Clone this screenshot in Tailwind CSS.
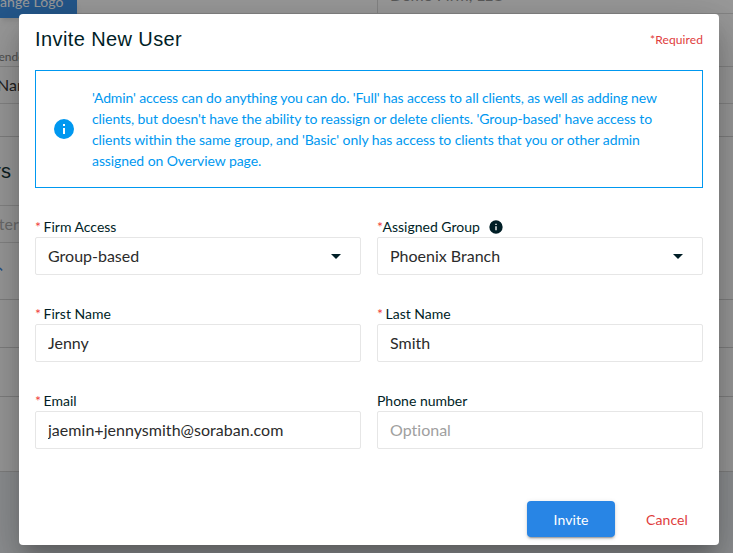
<!DOCTYPE html>
<html lang="en">
<head>
    <meta charset="UTF-8">
    <meta name="viewport" content="width=device-width, initial-scale=1.0">
    <title>Invite New User</title>
    <script src="https://cdn.jsdelivr.net/npm/@tailwindcss/browser@4"></script>
</head>
<body class="relative h-[553px] overflow-hidden bg-[#e9edf0] font-['Lato',sans-serif] text-[#001e26] [font-variant-ligatures:none]">

    <!-- Settings page -->
    <div class="h-[472px] overflow-hidden bg-white">
        <div class="flex h-[14px] justify-between border-b border-[#d9d9d9]">
            <div class="h-[18px] w-[77px] shrink-0 bg-[#2885e5] shadow-md">
                <div class="-mt-[9px] w-[61px] text-[14px] leading-[21px] tracking-[0.1px] whitespace-nowrap text-white">ange Logo</div>
            </div>
            <div class="h-[14px] w-[356px] shrink-0 border-b border-l border-[#d9d9d9] pl-3">
                <div class="-mt-[15px] text-[16px] leading-[20px] text-[#8a8a8a]">Demo Firm, LLC</div>
            </div>
        </div>
        <div class="h-[53px] border-b border-[#d9d9d9] pt-[34px]">
            <div class="-ml-[8px] text-[12px] leading-[18px] text-[#777]">Sender</div>
        </div>
        <div class="h-[37px] border-b border-[#d9d9d9] pt-[8px]">
            <div class="-ml-[3px] text-[16px] leading-[20px] text-[#222]">Name</div>
        </div>
        <div class="h-[33px] border-b border-[#d0d0d0]"></div>
        <div class="h-[163px] border-b border-[#d0d0d0] pt-[22px]">
            <div class="-ml-[42px] w-[53px] text-right font-['Liberation_Sans',sans-serif] text-[20px] leading-[24px]">Users</div>
            <div class="mt-[22px] h-[38px] w-[340px] border-y border-[#d9d9d9] pt-[8px]">
                <div class="-ml-[19px] text-[16px] leading-[20px] text-[#aaa]">Enter</div>
            </div>
            <svg class="mt-[24px] h-[6px] w-[4px]" viewBox="0 0 4 6"><path d="M0 1 2.2 3.6" stroke="#2885e5" stroke-width="1.5" fill="none"/></svg>
        </div>
        <div class="h-[48px] border-b border-[#d0d0d0]"></div>
        <div class="h-[49px] border-b border-[#d0d0d0]"></div>
        <div class="h-[75px] border-b border-[#d0d0d0]"></div>
    </div>

    <!-- Dialog -->
    <div class="absolute inset-0 bg-[#212121]/46 pt-[14px] pl-[19px]">
        <div class="h-[531px] w-[700px] rounded bg-white px-4 shadow-[0_11px_15px_-7px_rgba(0,0,0,0.2),0_24px_38px_3px_rgba(0,0,0,0.14),0_9px_46px_8px_rgba(0,0,0,0.12)]">
            <div class="flex h-[56px] items-start justify-between">
                <h2 class="pt-[9px] font-['Liberation_Sans',sans-serif] text-[20px] leading-[32px] tracking-[0.4px]">Invite New User</h2>
                <span class="pt-[17px] text-[12px] leading-[18px] tracking-[0.1px] text-[#e03c3c]">*Required</span>
            </div>

            <div class="flex h-[118px] w-[668px] items-center border border-[#0098f0] pl-[16px] text-[#0098f0]">
                <svg class="size-6 shrink-0" viewBox="0 0 24 24" fill="currentColor"><path d="M13 9h-2V7h2m0 10h-2v-6h2m-1-9A10 10 0 0 0 2 12a10 10 0 0 0 10 10 10 10 0 0 0 10-10A10 10 0 0 0 12 2Z"/></svg>
                <p class="ml-4 text-[14px] leading-[21px] tracking-[-0.08px] whitespace-nowrap"><span class="tracking-[-0.125px]">'Admin' access can do anything you can do. 'Full' has access to all clients, as well as adding new</span><br>clients, but doesn't have the ability to reassign or delete clients. 'Group-based' have access to<br>clients within the same group, and 'Basic' only has access to clients that you or other admin<br>assigned on Overview page.</p>
            </div>

            <div class="mt-[28px] grid grid-cols-2 gap-x-4 gap-y-[28px]">
                <div>
                    <div class="h-[21px] text-[14px] leading-[21px]"><span class="tracking-[-1px] text-[#f03e3e]">*</span> Firm Access</div>
                    <div class="flex h-[38px] items-center justify-between rounded-[2px] border border-[#e6e6e6] pr-3 pl-3 text-[16px] text-[#2b2b2b]">
                        Group-based
                        <svg class="size-6 text-[#001e26]" viewBox="0 0 24 24" fill="currentColor"><path d="M7 10l5 5 5-5H7Z"/></svg>
                    </div>
                </div>
                <div>
                    <div class="flex h-[21px] items-center text-[14px] leading-[21px]"><span class="tracking-[-0.5px] text-[#f03e3e]">*</span>Assigned Group
                        <svg class="ml-2 size-4" viewBox="0 0 24 24" fill="currentColor"><path d="M13 9h-2V7h2m0 10h-2v-6h2m-1-9A10 10 0 0 0 2 12a10 10 0 0 0 10 10 10 10 0 0 0 10-10A10 10 0 0 0 12 2Z"/></svg>
                    </div>
                    <div class="flex h-[38px] items-center justify-between rounded-[2px] border border-[#e6e6e6] pr-3 pl-3 text-[16px] text-[#2b2b2b]">
                        Phoenix Branch
                        <svg class="size-6 text-[#001e26]" viewBox="0 0 24 24" fill="currentColor"><path d="M7 10l5 5 5-5H7Z"/></svg>
                    </div>
                </div>
                <div>
                    <div class="h-[21px] text-[14px] leading-[21px]"><span class="tracking-[-1px] text-[#f03e3e]">*</span> First Name</div>
                    <input type="text" value="Jenny" class="block h-[38px] w-full rounded-[2px] border border-[#e6e6e6] px-3 pb-[2px] text-[16px] text-[#2b2b2b]">
                </div>
                <div>
                    <div class="h-[21px] text-[14px] leading-[21px]"><span class="tracking-[-1px] text-[#f03e3e]">*</span> Last Name</div>
                    <input type="text" value="Smith" class="block h-[38px] w-full rounded-[2px] border border-[#e6e6e6] px-3 pb-[2px] text-[16px] text-[#2b2b2b]">
                </div>
                <div>
                    <div class="h-[21px] text-[14px] leading-[21px]"><span class="tracking-[-1px] text-[#f03e3e]">*</span> Email</div>
                    <input type="text" value="jaemin+jennysmith@soraban.com" class="block h-[38px] w-full rounded-[2px] border border-[#e6e6e6] px-3 pb-[2px] text-[16px] tracking-[0.03px] text-[#2b2b2b]">
                </div>
                <div>
                    <div class="h-[21px] text-[14px] leading-[21px]">Phone number</div>
                    <input type="text" placeholder="Optional" class="block h-[38px] w-full rounded-[2px] border border-[#e6e6e6] px-3 pb-[2px] text-[16px] tracking-[0.01px] text-[#2b2b2b] placeholder:text-[#a0a0a0]">
                </div>
            </div>

            <div class="mt-[52px] flex justify-end">
                <button class="h-[36px] w-[88px] rounded bg-[#2885e5] text-[14px] tracking-[0.1px] text-white shadow-[0_3px_1px_-2px_rgba(0,0,0,0.2),0_2px_2px_0_rgba(0,0,0,0.14),0_1px_5px_0_rgba(0,0,0,0.12)]">Invite</button>
                <button class="ml-4 h-[36px] w-[72px] text-[14px] tracking-[0.1px] text-[#e03c3c]">Cancel</button>
            </div>
        </div>
    </div>
</body>
</html>
